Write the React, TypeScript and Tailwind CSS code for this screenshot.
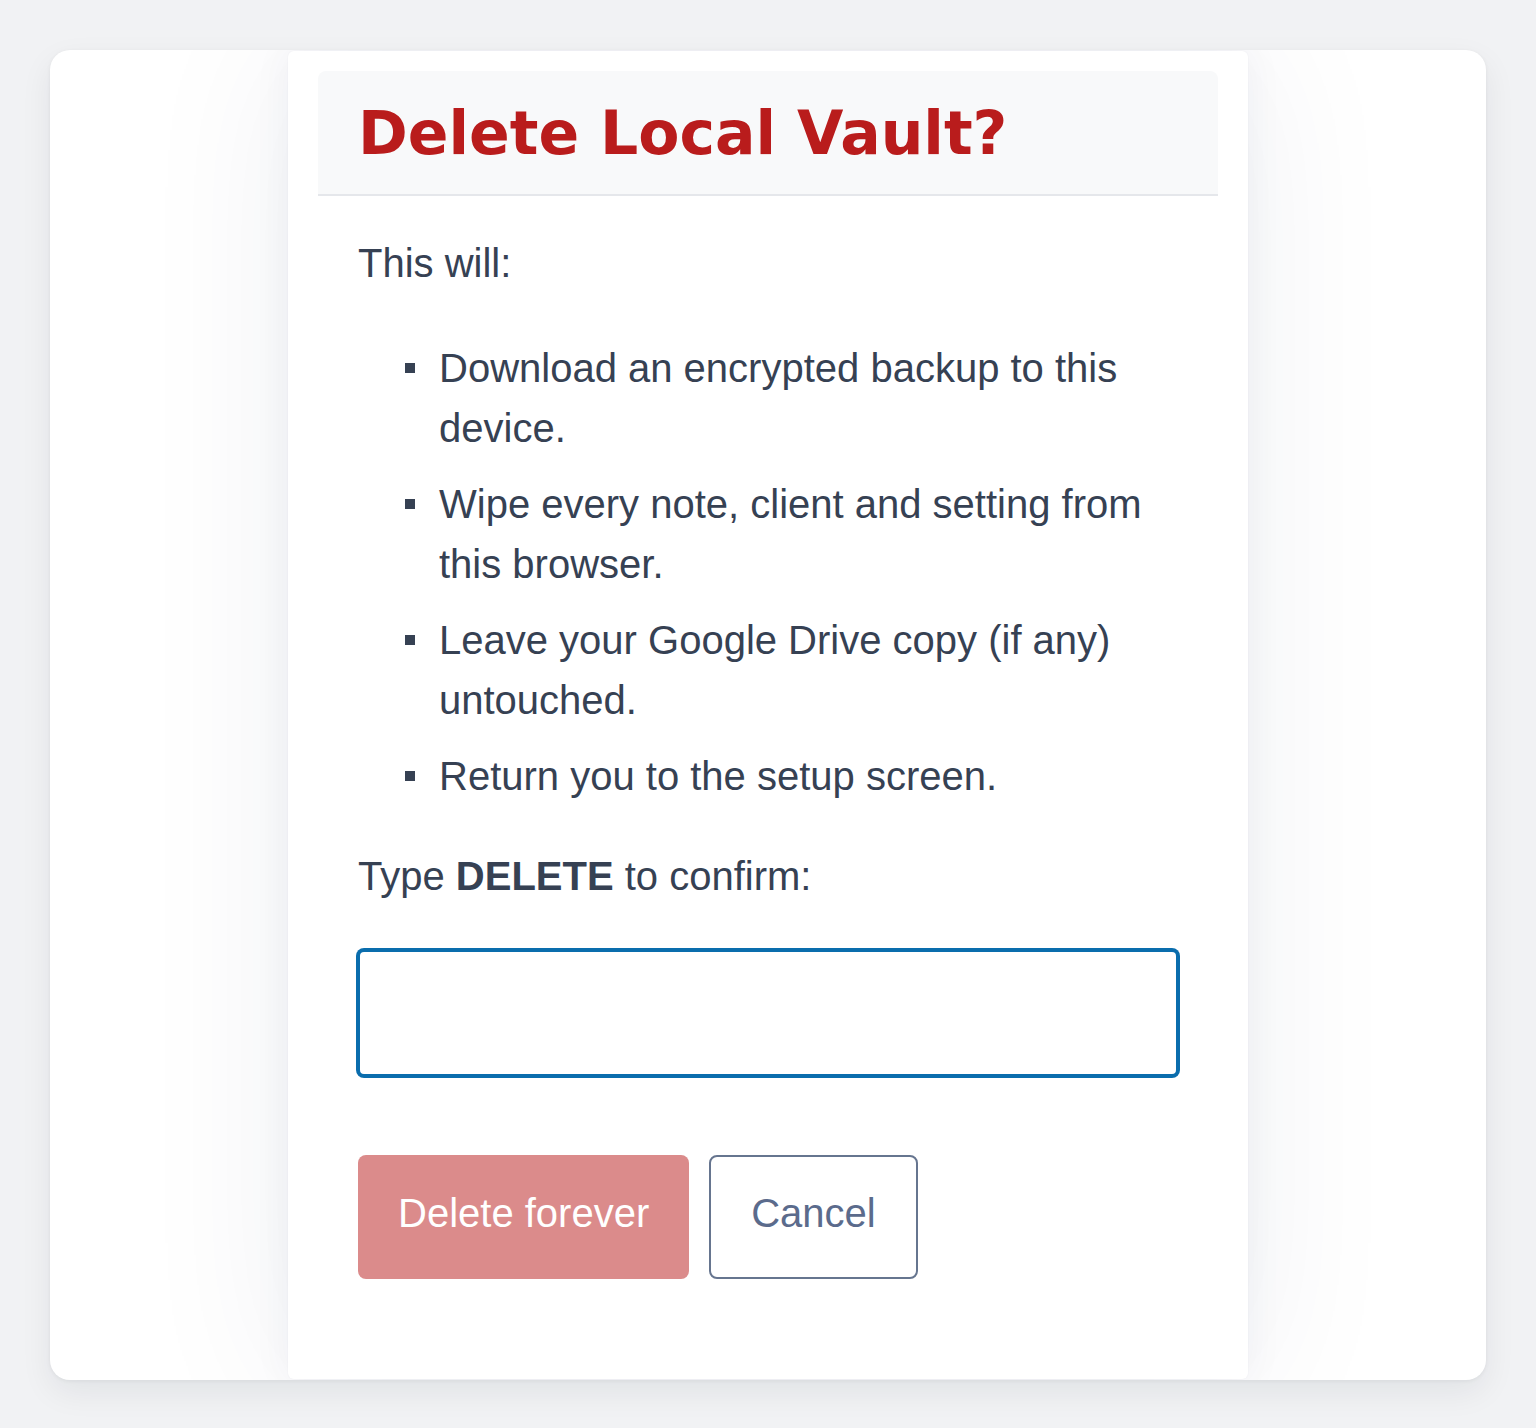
import React, { useState } from 'react';

const steps = [
  'Download an encrypted backup to this device.',
  'Wipe every note, client and setting from this browser.',
  'Leave your Google Drive copy (if any) untouched.',
  'Return you to the setup screen.',
];

export default function App() {
  const [confirmText, setConfirmText] = useState('');
  const canDelete = confirmText === 'DELETE';

  return (
    <div className="min-h-[1428px] bg-[#f1f2f4] px-[50px] pt-[50px] pb-[48px] font-['Liberation_Sans',Arial,sans-serif]">
      <div className="overflow-hidden rounded-[20px] bg-white py-px shadow-[0_12px_32px_rgba(15,23,42,0.07),0_1px_4px_rgba(15,23,42,0.06)]">
        <div className="mx-auto w-[960px] rounded-md bg-white px-[30px] pt-5 pb-[100px] shadow-[0_0_2px_rgba(30,41,80,0.06),0_0_40px_rgba(30,41,90,0.05),0_0_160px_rgba(30,41,90,0.07)]">
          <div className="rounded-t-lg border-b-2 border-[#e5e7eb] bg-[#f8f9fa] px-10 pt-[26px] pb-[25px]">
            <h1 className="font-['DejaVu_Sans',sans-serif] text-[60px] leading-[72px] font-bold text-[#b91c1c]">
              Delete Local Vault?
            </h1>
          </div>

          <div className="px-10 pt-[37px] text-[40px] leading-[60px] text-gray-700">
            <p>This will:</p>

            <ul className="mt-[45px] flex flex-col gap-4">
              {steps.map((step) => (
                <li key={step} className="flex">
                  <span className="flex h-[60px] w-[81px] shrink-0 items-center pl-[47px]">
                    <span className="h-[10px] w-[10px] bg-gray-700" />
                  </span>
                  <span>{step}</span>
                </li>
              ))}
            </ul>

            <label htmlFor="confirm" className="mt-10 block">
              Type <strong className="font-bold">DELETE</strong> to confirm:
            </label>

            <input
              id="confirm"
              type="text"
              value={confirmText}
              onChange={(e) => setConfirmText(e.target.value)}
              autoFocus
              className="mt-[44px] block h-[126px] w-full rounded-md border-2 border-[#0a6dad] bg-white px-5 text-[40px] outline-none ring-2 ring-[#0a6dad]"
            />

            <div className="mt-[79px] flex gap-5">
              <button
                type="button"
                disabled={!canDelete}
                className="rounded-lg bg-[#b91c1c] px-10 pt-[28px] pb-[36px] text-[40px] leading-[60px] text-white disabled:bg-[#db8b8b]"
              >
                Delete forever
              </button>
              <button
                type="button"
                onClick={() => setConfirmText('')}
                className="rounded-lg border-2 border-[#66758f] bg-white px-10 pt-[26px] pb-[34px] text-[40px] leading-[60px] text-[#5b6b8c]"
              >
                Cancel
              </button>
            </div>
          </div>
        </div>
      </div>
    </div>
  );
}
